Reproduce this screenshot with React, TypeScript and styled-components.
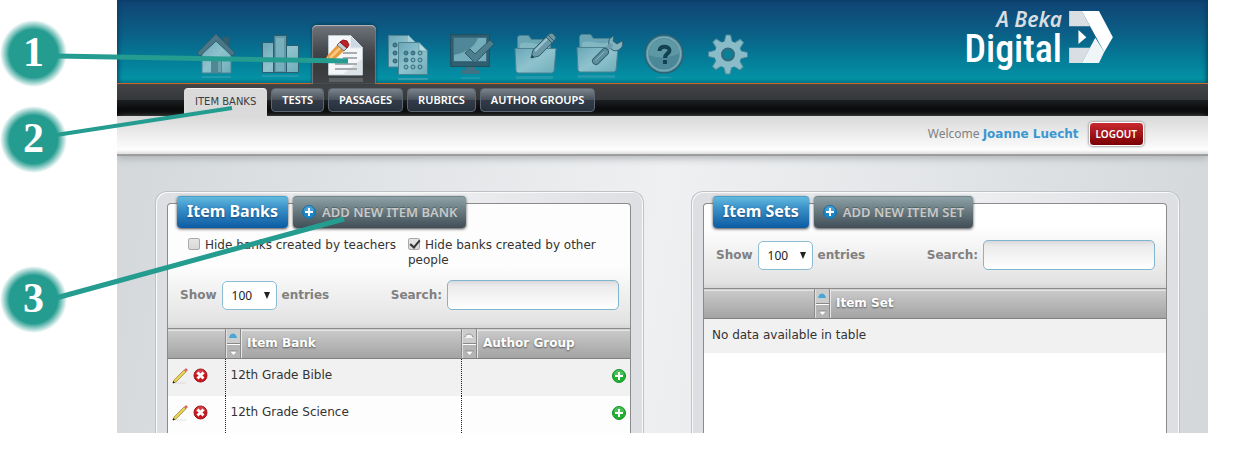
import React, { ReactNode } from "react";
import styled, { createGlobalStyle, css } from "styled-components";

const ui = `"DejaVu Sans", Verdana, sans-serif`;
const narrow = `"Noto Sans", Tahoma, sans-serif`;
const teal = "#259c90";

const GlobalStyle = createGlobalStyle`
  * { box-sizing: border-box; }
  body { margin: 0; background: #fff; font: 12px/15px ${narrow}; color: #333; }
  button, input, select { font: inherit; }
`;

const Page = styled.div`
  position: relative;
  padding: 0 41px 20px 117px;
`;

const Shell = styled.div`
  overflow: clip;
  background:
    linear-gradient(100deg, #d3d7da 0%, #eff0f2 50%, #d3d7da 100%);
`;

const Header = styled.header`
  display: flex;
  justify-content: space-between;
  align-items: flex-end;
  height: 84px;
  padding: 0 95px 0 67px;
  border-bottom: 1px solid #c9692b;
  background: linear-gradient(#0d4270 0, #0f4a79 8px, #0a6087 34px, #047f9a 62px, #0491a5 78px, #047f92 83px);
  box-shadow: inset 4px 0 5px -3px #0a3c5c, inset -4px 0 5px -3px #0a3c5c;
`;

const IconNav = styled.nav`
  display: flex;
  margin-bottom: -1px;
`;

const IconTab = styled.a<{ $active?: boolean }>`
  display: block;
  width: 64px;
  height: 59px;
  border-radius: 5px 5px 0 0;
  ${(p) =>
    p.$active &&
    css`
      background: linear-gradient(#70757b, #43474b 45%, #37393b 70%, #424346);
      box-shadow: inset 0 1px 1px #b5b9bd, inset 1px 0 1px #6d7276, inset -1px 0 1px #6d7276, 0 -1px 3px #0a3c5c;
    `}
  svg { display: block; }
`;

const Logo = styled.a`
  display: flex;
  align-items: flex-start;
  align-self: flex-start;
  gap: 7px;
  padding-top: 11px;
  color: #fff;
  text-decoration: none;
  svg { display: block; }
`;

const LogoWords = styled.span`
  display: flex;
  flex-direction: column;
  align-items: flex-end;
`;

const LogoSmall = styled.span`
  color: #d9dde1;
  font: italic 600 21px/16px ${narrow};
`;

const LogoBig = styled.span`
  font: 500 38px/44px "Roboto Condensed", Roboto, sans-serif;
`;

const SubNav = styled.nav`
  display: flex;
  gap: 4px;
  height: 32px;
  padding: 4px 67px 0;
  background: linear-gradient(#434446 0, #35383b 16px, #1d1f22 16px, #000 30px);
`;

const SubTab = styled.a<{ $active?: boolean }>`
  height: 24px;
  padding: 0 10px;
  border: 1px solid #5b6772;
  border-radius: 4px;
  background: linear-gradient(#7a828b, #4a525c 48%, #323b47 52%, #27313d);
  color: #fff;
  font: 600 11px/22px ${narrow};
  text-decoration: none;
  white-space: nowrap;
  ${(p) =>
    p.$active &&
    css`
      height: 28px;
      border-color: #eee #dcdcdc transparent;
      border-radius: 4px 4px 0 0;
      background: #dadada;
      color: #3c3c3c;
      font: 10px/26px ${ui};
    `}
`;

const UserBar = styled.div`
  display: flex;
  justify-content: flex-end;
  align-items: center;
  gap: 10px;
  height: 40px;
  padding: 0 64px 2px 0;
  border-bottom: 2px solid #9b9e9d;
  background: linear-gradient(#d9d9d9, #fdfdfd 34px, #e4e4e4 37px);
  box-shadow: 0 2px 8px #a9adb0;
  color: #808080;
  a { color: #3c97cf; font: bold 12px/15px ${ui}; text-decoration: none; }
`;

const Logout = styled.button`
  height: 24px;
  padding: 0 6px;
  border: 1px solid #fff;
  border-radius: 4px;
  background: linear-gradient(#c9292f, #7a0003);
  box-shadow: 0 0 2px 1px #aaa;
  color: #fff;
  font: 600 10px/20px ${narrow};
`;

const Columns = styled.main`
  display: grid;
  grid-template-columns: 1fr 1fr;
  gap: 47px;
  padding: 35px 28px 0 38px;
`;

const Frame = styled.section`
  display: flex;
  flex-direction: column;
  padding: 11px 12px 0 11px;
  border: 1px solid #bfc1c4;
  border-bottom: 0;
  border-radius: 12px 12px 0 0;
  background: linear-gradient(90deg, #dcdee1, #f0f1f3 50%, #dedfe2);
  box-shadow: inset 1px 1px 0 #fafafa, inset -1px 0 0 #fafafa;
`;

const Panel = styled.div<{ $plain?: boolean }>`
  flex: 1;
  border: 1px solid #8b8b8b;
  border-bottom: 0;
  border-radius: 4px 4px 0 0;
  background: ${(p) => (p.$plain ? "#fff" : "#fdfdfd")};
`;

const Toolbar = styled.div`
  padding-bottom: 18px;
  background: linear-gradient(transparent calc(100% - 62px), #e3e3e3 calc(100% - 6px), #d6d6d6);
`;

const TitleRow = styled.div`
  display: flex;
  gap: 5px;
  margin-top: -8px;
  padding-left: 9px;
`;

const Title = styled.h2`
  margin: 0;
  padding: 0 10px;
  height: 32px;
  border-radius: 4px;
  background: linear-gradient(#66bde0, #3d94ca 35%, #0b5ba3);
  box-shadow: inset 0 1px 0 #4b9ec9, 0 1px 3px #444;
  color: #fff;
  font: bold 16px/30px ${narrow};
  text-shadow: 0 1px 2px #1a4a7a;
`;

const AddButton = styled.button`
  display: flex;
  align-items: center;
  gap: 6px;
  height: 32px;
  padding: 0 9px;
  border: 0;
  border-radius: 4px;
  background: linear-gradient(#90a4aa, #66777d 50%, #414e57);
  box-shadow: inset 0 1px 0 #6f868f, 0 1px 3px #444;
  color: #c9c9c9;
  font: 600 13px/30px ${narrow};
  text-shadow: 0 -1px 0 #566;
  white-space: nowrap;
`;

const Options = styled.div`
  display: grid;
  grid-template-columns: 220px 1fr;
  margin-top: 10px;
  padding: 0 20px;
  font: 12px/15px ${ui};
`;

const Check = styled.input`
  appearance: none;
  position: relative;
  width: 12px;
  height: 12px;
  margin: 0 5px 0 0;
  vertical-align: -1px;
  border: 1px solid #aaa;
  border-radius: 2px;
  background: linear-gradient(#e6e6e6, #d8d8d8);
  &:checked::after {
    content: "";
    position: absolute;
    left: 3px;
    top: -1px;
    width: 4px;
    height: 8px;
    border: solid #333;
    border-width: 0 2px 2px 0;
    transform: rotate(40deg);
  }
`;

const Controls = styled.div`
  display: flex;
  justify-content: space-between;
  align-items: center;
  margin-top: 12px;
  padding: 0 11px 0 12px;
  color: #808080;
  font: bold 12px/30px ${ui};
  label { display: flex; align-items: center; gap: 5px; }
`;

const Picker = styled.select`
  appearance: none;
  width: 55px;
  height: 29px;
  padding: 0 9px;
  border: 1px solid #8bbcd4;
  border-radius: 5px;
  background: #fff url("data:image/svg+xml,%3Csvg xmlns='http://www.w3.org/2000/svg' width='6' height='7'%3E%3Cpath d='M0 0h6L3 7z' fill='%23222'/%3E%3C/svg%3E") no-repeat 41px 10px;
  color: #222;
  font: 12px ${narrow};
`;

const SearchBox = styled.input`
  width: 172px;
  height: 30px;
  border: 1px solid #7fb5cf;
  border-radius: 5px;
  background: linear-gradient(#d9d9dc, #ebebeb 5px, #fff);
`;

const Table = styled.table`
  width: 100%;
  table-layout: fixed;
  border-collapse: collapse;
`;

const Th = styled.th<{ $width?: string }>`
  width: ${(p) => p.$width ?? "auto"};
  height: 30px;
  padding: 0;
  border-top: 1px solid #8a8a8a;
  border-bottom: 1px solid #808080;
  background: linear-gradient(#fff 1px, #c9c9c9 1px, #a3a3a3);
  color: #fff;
  font: bold 12px/29px ${ui};
  text-align: left;
  text-shadow: 0 1px 2px #555;
`;

const Heading = styled.div`
  display: flex;
  gap: 6px;
`;

const Sorter = styled.button`
  display: flex;
  flex-direction: column;
  width: 16px;
  height: 29px;
  padding: 0;
  border: solid #8a8a8a;
  border-width: 0 1px;
  background: linear-gradient(#ccc 14px, #888 14px, #888 15px, #fff 15px, #fff 16px, #b4b4b4 16px);
  box-shadow: 1px 0 0 #e8e8e8, inset 1px 0 0 #e0e0e0;
`;

const Td = styled.td<{ $dotted?: boolean; $end?: boolean; $height?: number }>`
  height: ${(p) => p.$height ?? 37}px;
  padding: 0 4px 3px;
  font: 12px/15px ${ui};
  ${(p) => p.$dotted && "border-left: 1px dotted #222; padding-left: 5px;"}
  ${(p) => p.$end && "text-align: right;"}
  tr:nth-child(odd) > & { background: #f1f1f1; }
`;

const Message = styled(Td)`
  padding: 0 8px;
`;

const RowButton = styled.button`
  padding: 0;
  margin-right: 5px;
  border: 0;
  background: none;
  vertical-align: middle;
  svg { display: block; }
  &:last-child { margin-right: 0; }
`;

const Lines = styled.svg`
  position: absolute;
  left: 0;
  top: 0;
  pointer-events: none;
`;

const Step = styled.span<{ $top: number }>`
  position: absolute;
  left: 0;
  top: ${(p) => p.$top}px;
  width: 67px;
  height: 67px;
  border-radius: 50%;
  background: radial-gradient(circle closest-side, ${teal} 72%, rgba(37, 156, 144, 0) 100%);
  color: #fff;
  font: bold 42px/65px "Liberation Serif", serif;
  text-align: center;
`;

const edge = "#2b5f70";
const face = "#7db4c1";
const mid = "#4d8292";

function Glyph({ children }: { children: ReactNode }) {
  return (
    <svg width="64" height="59" viewBox="0 0 64 59" strokeLinejoin="round" aria-hidden="true">
      <defs>
        <linearGradient id="pale" x1="0" y1="0" x2="1" y2="1">
          <stop offset="0" stopColor="#6aa6b7" />
          <stop offset=".5" stopColor="#8fc3cd" />
          <stop offset="1" stopColor="#6fadb9" />
        </linearGradient>
      </defs>
      {children}
    </svg>
  );
}

const HomeIcon = () => (
  <Glyph>
    <path d="M39 12h6v13h-6z" fill="#345f70" stroke={edge} />
    <path d="M18 27 32 14l15 13v21H18z" fill="url(#pale)" stroke={mid} />
    <path d="M27 33h11v15H27z" fill="#4f8795" />
    <path d="M34 35h3v12h-3z" fill="#6ba2ae" />
    <path d="M32 9 13 28l3 3 16-15 16 15 3-3z" fill="#4a7685" stroke={edge} />
    <path d="M18 51h29v2H18z" fill={face} opacity=".25" />
  </Glyph>
);

const ChartIcon = () => (
  <Glyph>
    <path d="M14.5 17.5h11v30h-11zM38.500 20.500h12v27h-12z" fill="url(#pale)" stroke={edge} />
    <path d="M26 10.500h12.500v37H26z" fill="#6298a8" stroke={edge} />
    <path d="M28 13h8v33h-8z" fill="#78afbc" />
    <path d="M14 50h37v2H14z" fill={face} opacity=".25" />
  </Glyph>
);

const AuthorIcon = () => (
  <Glyph>
    <path d="M16.500 10.500H38.500L50.500 23V50H16.500z" fill="#f4f6f7" stroke="#b9c6cd" />
    <path d="M50 34v16H30z" fill="#dce3e7" />
    <path d="M38.500 10.500V23h12z" fill="#c9d8e2" stroke="#e6edf1" />
    <path d="M31 28h14M31 33h14M23 39h22M23 44h22" stroke="#a7adb3" strokeWidth="2" />
    <path d="m13 38 2-7 12-13 7 6-13 12z" fill="#eb9a3a" />
    <path d="m17 32 12-12 2 2-12 12z" fill="#fbc883" />
    <path d="m25 20 3-3 7 6-3 3z" fill="#c6cbce" stroke="#697078" />
    <path d="m28 17 3-2 4 1 2 4-2 3z" fill="#c0222a" stroke="#8d1118" />
    <path d="m13 38 2-6 4 4z" fill="#f5dcae" />
    <path d="M17 53h34v4H17z" fill="#aab0b3" opacity=".3" />
  </Glyph>
);

const PagesIcon = () => (
  <Glyph>
    <path d="M12.500 10.500H32L39 17v25H12.500z" fill="url(#pale)" stroke={mid} />
    <path d="M32 10v7h7z" fill="#a5d0d8" />
    {[20, 28, 36].map((y) => (
      <circle key={y} cx="19" cy={y} r="2" fill={mid} stroke={edge} />
    ))}
    <path d="M22.500 17.500H43L51.500 26V49.500H22.500z" fill="url(#pale)" stroke={mid} />
    <path d="M43 17.500V26h8.500z" fill="#b2dbe1" stroke={mid} strokeWidth=".5" />
    {[28, 35, 42].flatMap((y) =>
      [30, 37, 44].map((x) => (
        <circle key={`${x}-${y}`} cx={x} cy={y} r="2" fill={x + y < 72 ? mid : face} stroke="#34697b" />
      ))
    )}
    <path d="M22 53h30v2H22z" fill={face} opacity=".4" />
  </Glyph>
);

const MonitorIcon = () => (
  <Glyph>
    <path d="M10.500 9.500h39v32h-39z" fill="#2f5e70" stroke="#23505f" />
    <path d="M13.500 12.500h33v24h-33z" fill="#4f8799" stroke="#3a6f81" />
    <path d="M14 36V30C25 28 35 22 38 13h8v23z" fill="#76adbb" />
    <path d="M26 42h9v3h5v4H21v-4h5z" fill="#3f7283" />
    <path d="m25 28 5-4 5 5 15-14 4 4-19 19z" fill="#4c7e8d" stroke="#2c5a69" />
    <path d="M21 52h19v2H21z" fill={face} opacity=".2" />
  </Glyph>
);

const FolderBase = () => (
  <>
    <path d="M13.500 47V12l2-1.500h9l3 4h17l2 2V47z" fill="#6ba5b4" stroke={mid} />
    <path d="M16 19c8-5 18 4 29-2v6H16z" fill="#91c3cc" opacity=".6" />
    <path d="M11 23.500h41l-2 23-2 1.500H14l-2-1.500z" fill="url(#pale)" stroke={mid} />
    <path d="M12 51h37v3H12z" fill={face} opacity=".25" />
  </>
);

const FolderPenIcon = () => (
  <Glyph>
    <FolderBase />
    <path d="m27 33 2-8L45 9l3-1 4 4-1 3-16 16z" fill="#6b98a6" stroke="#31616f" />
    <path d="m42 12 6 6M44 10l6 6" stroke="#31616f" />
    <path d="M31 26 43 14" stroke="#9cc5ce" strokeWidth="2" />
    <path d="m27 33 1-3 2 2z" fill="#173f4c" />
  </Glyph>
);

const FolderToolIcon = () => (
  <Glyph>
    <g transform="translate(-2 -1)"><FolderBase /></g>
    <path
      d="M43 24a7 7 0 0 0 11-8l-5 3-4-3 1-5a7 7 0 0 0-5 9z"
      fill="#83b3bf"
      stroke="#31616f"
    />
    <path d="m44 19-9 9" stroke="#6e9dab" strokeWidth="4" />
    <path d="m37 27-9 9" stroke="#31616f" strokeWidth="8" strokeLinecap="round" />
    <path d="m37 27-9 9" stroke="#5e909f" strokeWidth="6" strokeLinecap="round" />
    <path d="m36 27-8 8" stroke="#83b3bf" strokeWidth="1" strokeLinecap="round" />
  </Glyph>
);

const HelpIcon = () => (
  <Glyph>
    <circle cx="32" cy="29" r="19" fill="#5a919f" stroke="#2b6172" strokeWidth="1.500" />
    <circle cx="32" cy="29" r="16.500" fill="#4b8796" stroke="#79acb8" strokeWidth="1.500" />
    <path d="M16 30a16 15 0 0 1 32-2c-10 5-22 6-32 2z" fill="#5f98a5" />
    <path d="M27.500 26c0-6 10-5.500 10-.5 0 3-4.500 3-4.500 7.500" fill="none" stroke="#12424f" strokeWidth="4" />
    <path d="M31 35h4v4h-4z" fill="#12424f" />
    <path d="M23 53q9-3 18 0z" fill={face} opacity=".3" />
  </Glyph>
);

const GearIcon = () => (
  <Glyph>
    <g fill="#89bcc8" stroke="#4d8b9b" strokeWidth="1">
      {[0, 45, 90, 135, 180, 225, 270, 315].map((a) => (
        <path key={a} d="m28 18 2-8h4.500l2 8z" transform={`rotate(${a} 32 29.500)`} />
      ))}
    </g>
    <circle cx="32" cy="29.500" r="13.500" fill="#89bcc8" />
    <circle cx="32" cy="29.500" r="6" fill="#0a7f95" stroke="#35697b" strokeWidth="2" />
  </Glyph>
);

const icons: [string, () => React.JSX.Element][] = [
  ["Home", HomeIcon],
  ["Reports", ChartIcon],
  ["Authoring", AuthorIcon],
  ["Answer sheets", PagesIcon],
  ["Online testing", MonitorIcon],
  ["Planner", FolderPenIcon],
  ["Tools", FolderToolIcon],
  ["Help", HelpIcon],
  ["Settings", GearIcon],
];

const tabs = ["ITEM BANKS", "TESTS", "PASSAGES", "RUBRICS", "AUTHOR GROUPS"];

const PlusBadge = ({ green }: { green?: boolean }) => (
  <svg width="14" height="14" viewBox="0 0 14 14" aria-hidden="true">
    <circle cx="7" cy="7" r="6.500" fill={green ? "#1fb02f" : "#1c86c4"} stroke={green ? "#15922a" : "#1472ab"} />
    <path d="M2 6a5 5 0 0 1 10 0z" fill="#fff" opacity=".2" />
    <path d="M7 3v8M3 7h8" stroke="#fff" strokeWidth="2" />
  </svg>
);

const PencilIcon = () => (
  <svg width="16" height="16" viewBox="0 0 16 16" aria-hidden="true">
    <path d="M3 15h11" stroke="#bbb" opacity=".4" />
    <path d="m1 15 1-3L12 2l2 2L4 14z" fill="#e8cf55" stroke="#9b8430" strokeWidth=".7" />
    <path d="m12 2 2-2 2 2-2 2z" fill="#e0666c" />
    <path d="m1 15 .5-1.500 1 1z" fill="#111" stroke="#111" strokeWidth=".6" />
  </svg>
);

const DeleteIcon = () => (
  <svg width="15" height="15" viewBox="0 0 15 15" aria-hidden="true">
    <circle cx="7.500" cy="7.500" r="6.500" fill="#c9181e" stroke="#a01217" />
    <path d="M2.500 6.500a5 5 0 0 1 10 0z" fill="#fff" opacity=".18" />
    <path d="m4.500 4.500 6 6m0-6-6 6" stroke="#fff" strokeWidth="2.800" />
  </svg>
);

function SortButton({ ascending, name }: { ascending?: boolean; name: string }) {
  return (
    <Sorter aria-label={`Sort by ${name}`}>
      <svg width="14" height="29" viewBox="0 0 14 29" aria-hidden="true">
        <path d="M3 9c1-6 7-6 8 0z" fill={ascending ? "#45a7d8" : "#f4f4f4"} />
        {!ascending && <path d="M3 8c1-4 7-4 8 0" fill="none" stroke="#888" />}
        <path d="m4 22 3.500 4 3.500-4z" fill="#fff" />
        <path d="M3.500 22h8" stroke="#888" />
      </svg>
    </Sorter>
  );
}

function TableControls({ id }: { id: string }) {
  return (
    <Controls>
      <label htmlFor={`${id}-count`}>
        Show
        <Picker id={`${id}-count`} defaultValue="100">
          <option>100</option>
        </Picker>
        entries
      </label>
      <label htmlFor={`${id}-search`}>
        Search:
        <SearchBox id={`${id}-search`} type="text" />
      </label>
    </Controls>
  );
}

function ItemBanks() {
  return (
    <Frame>
      <Panel>
        <Toolbar>
          <TitleRow>
            <Title>Item Banks</Title>
            <AddButton><PlusBadge />ADD NEW ITEM BANK</AddButton>
          </TitleRow>
          <Options>
            <label><Check type="checkbox" />Hide banks created by teachers</label>
            <label><Check type="checkbox" defaultChecked />Hide banks created by other people</label>
          </Options>
          <TableControls id="banks" />
        </Toolbar>
        <Table>
          <thead>
            <tr>
              <Th $width="57px" />
              <Th><Heading><SortButton ascending name="Item Bank" />Item Bank</Heading></Th>
              <Th $width="169px"><Heading><SortButton name="Author Group" />Author Group</Heading></Th>
            </tr>
          </thead>
          <tbody>
            {["12th Grade Bible", "12th Grade Science"].map((bank) => (
              <tr key={bank}>
                <Td>
                  <RowButton aria-label={`Edit ${bank}`}><PencilIcon /></RowButton>
                  <RowButton aria-label={`Delete ${bank}`}><DeleteIcon /></RowButton>
                </Td>
                <Td $dotted>{bank}</Td>
                <Td $dotted $end>
                  <RowButton aria-label={`Add group to ${bank}`}><PlusBadge green /></RowButton>
                </Td>
              </tr>
            ))}
          </tbody>
        </Table>
      </Panel>
    </Frame>
  );
}

function ItemSets() {
  return (
    <Frame>
      <Panel $plain>
        <Toolbar>
          <TitleRow>
            <Title>Item Sets</Title>
            <AddButton><PlusBadge />ADD NEW ITEM SET</AddButton>
          </TitleRow>
          <TableControls id="sets" />
        </Toolbar>
        <Table>
          <thead>
            <tr>
              <Th $width="110px" />
              <Th><Heading><SortButton ascending name="Item Set" />Item Set</Heading></Th>
            </tr>
          </thead>
          <tbody>
            <tr><Message colSpan={2} $height={34}>No data available in table</Message></tr>
          </tbody>
        </Table>
      </Panel>
    </Frame>
  );
}

export default function App() {
  return (
    <Page>
      <GlobalStyle />
      <Shell>
        <Header>
          <IconNav>
            {icons.map(([name, Icon], i) => (
              <IconTab key={name} href="#" aria-label={name} $active={i === 2}><Icon /></IconTab>
            ))}
          </IconNav>
          <Logo href="#">
            <LogoWords>
              <LogoSmall>A Beka</LogoSmall>
              <LogoBig>Digital</LogoBig>
            </LogoWords>
            <svg width="44" height="52" viewBox="507 33 132 157" aria-hidden="true">
              <path d="M507 33h38l25 46h-63zM507 144h63l-25 46h-38z" fill="#d9dee2" />
              <path d="M545 33h52l42 79-26 45z" fill="#fff" />
              <path d="m586 114 27 43-16 33h-52z" fill="#f0f6f8" />
              <path d="m535 90 24 22-24 21z" fill="#fff" />
            </svg>
          </Logo>
        </Header>
        <SubNav>
          {tabs.map((name, i) => (
            <SubTab key={name} href="#" $active={i === 0}>{name}</SubTab>
          ))}
        </SubNav>
        <UserBar>
          <span>Welcome <a href="#">Joanne Luecht</a></span>
          <Logout>LOGOUT</Logout>
        </UserBar>
        <Columns>
          <ItemBanks />
          <ItemSets />
        </Columns>
      </Shell>
      <Lines width="400" height="340" viewBox="0 0 400 340" stroke={teal} strokeWidth="5" aria-hidden="true">
        <path d="m56 56 292 5" />
        <path d="m56 135 176-27" strokeWidth="4" />
        <path d="m56 298 288-79" />
      </Lines>
      <Step $top={20}>1</Step>
      <Step $top={106}>2</Step>
      <Step $top={266}>3</Step>
    </Page>
  );
}
